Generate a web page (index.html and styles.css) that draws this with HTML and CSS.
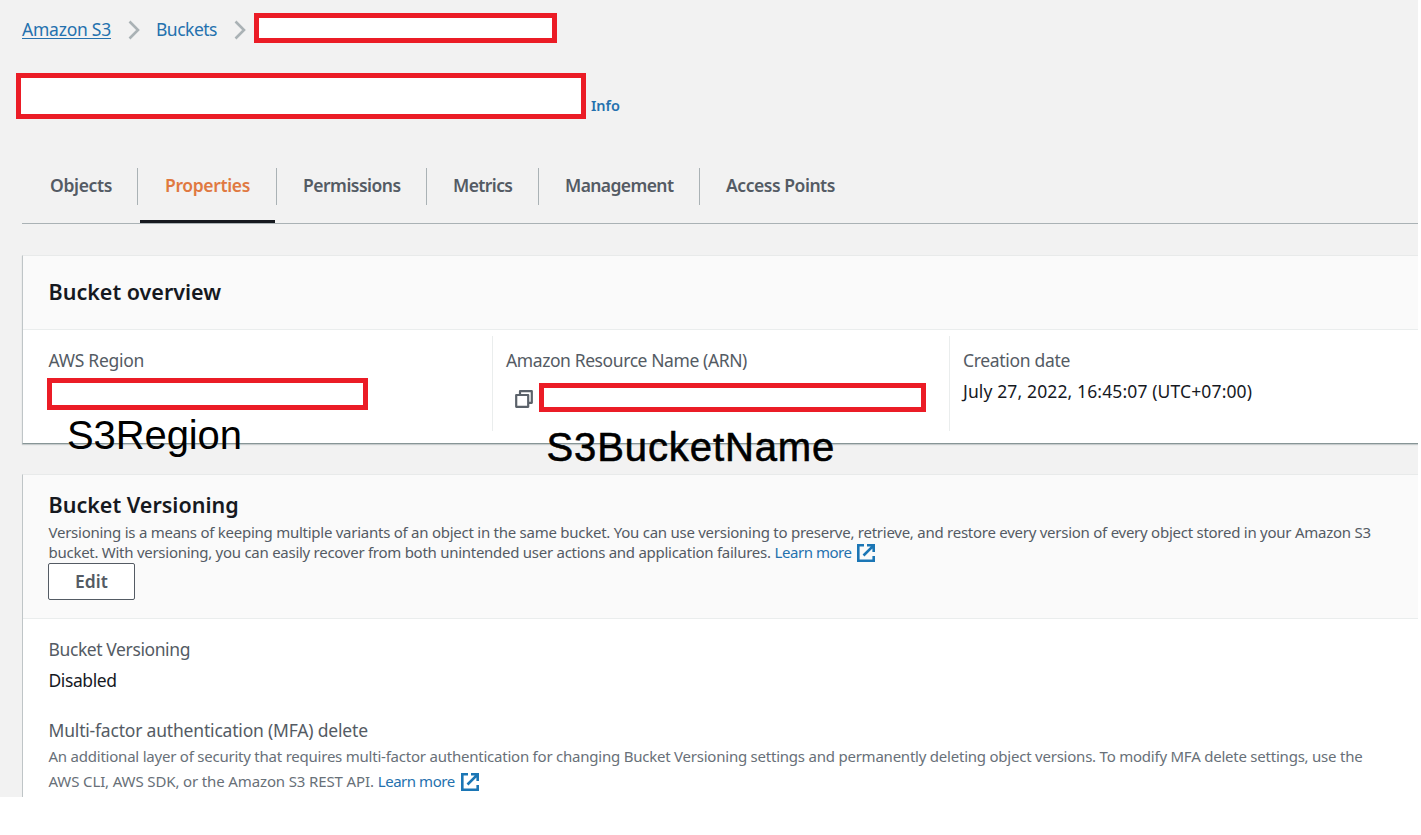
FILE: index.html
```html
<!DOCTYPE html>
<html lang="en">
<head>
<meta charset="utf-8">
<title>Bucket properties</title>
<link rel="stylesheet" href="styles.css">
</head>
<body>
<div class="app">
  <nav class="crumbs">
    <a class="crumb crumb-home" href="#">Amazon S3</a>
    <svg class="chevron" width="12" height="20" viewBox="0 0 12 20"><path d="M1.5 1.5 10 10 1.5 18.5" fill="none" stroke="#aab2b5" stroke-width="2.6"/></svg>
    <a class="crumb crumb-buckets" href="#">Buckets</a>
    <svg class="chevron" width="12" height="20" viewBox="0 0 12 20"><path d="M1.5 1.5 10 10 1.5 18.5" fill="none" stroke="#aab2b5" stroke-width="2.6"/></svg>
    <span class="redacted redacted-crumb"></span>
  </nav>

  <header class="title-row">
    <span class="redacted redacted-title"></span>
    <a class="info" href="#">Info</a>
  </header>

  <nav class="tabs">
    <a class="tab tab-objects" href="#">Objects</a>
    <a class="tab tab-properties" href="#">Properties</a>
    <a class="tab tab-permissions" href="#">Permissions</a>
    <a class="tab tab-metrics" href="#">Metrics</a>
    <a class="tab tab-management" href="#">Management</a>
    <a class="tab tab-access" href="#">Access Points</a>
  </nav>

  <section class="card overview">
    <div class="card-head overview-head"><h2 class="heading">Bucket overview</h2></div>
    <div class="columns">
      <div class="column">
        <div class="label label-region">AWS Region</div>
        <span class="redacted redacted-region"></span>
        <span class="note note-region">S3Region</span>
      </div>
      <div class="column">
        <div class="label label-arn">Amazon Resource Name (ARN)</div>
        <div class="arn">
          <svg width="18" height="18" viewBox="0 0 18 18" fill="none" stroke="#5b626a" stroke-width="2.2" stroke-linejoin="round"><path d="M5 4.5V1.2h11.8v11.6h-3.3"/><path d="M1.2 5h12v11.8h-12z"/></svg>
          <span class="redacted redacted-arn"></span>
        </div>
        <span class="note note-bucket">S3BucketName</span>
      </div>
      <div class="column">
        <div class="label label-date">Creation date</div>
        <div class="value value-date">July 27, 2022, 16:45:07 (UTC+07:00)</div>
      </div>
    </div>
  </section>

  <section class="card versioning">
    <div class="card-head versioning-head">
      <h2 class="heading heading-versioning">Bucket Versioning</h2>
      <p class="desc">
        <span class="desc-one">Versioning is a means of keeping multiple variants of an object in the same bucket. You can use versioning to preserve, retrieve, and restore every version of every object stored in your Amazon S3</span><br>
        <span class="desc-two">bucket. With versioning, you can easily recover from both unintended user actions and application failures.</span>
        <a class="more" href="#">Learn more</a><svg class="external" width="18" height="18" viewBox="0 0 18 18" fill="none" stroke="#1b76b5" stroke-width="2.6"><path d="M7 1.3H1.3v15.4h15.4V12"/><path d="M10 1.3h6.7V8M16.2 1.8 6.5 11.5"/></svg>
      </p>
      <button class="edit" type="button">Edit</button>
    </div>
    <div class="card-body">
      <div class="label label-versioning">Bucket Versioning</div>
      <div class="value value-disabled">Disabled</div>
      <div class="label label-mfa">Multi-factor authentication (MFA) delete</div>
      <p class="hint">
        <span class="hint-one">An additional layer of security that requires multi-factor authentication for changing Bucket Versioning settings and permanently deleting object versions. To modify MFA delete settings, use the</span><br>
        <span class="hint-two">AWS CLI, AWS SDK, or the Amazon S3 REST API.</span>
        <a class="more" href="#">Learn more</a><svg class="external external-hint" width="18" height="18" viewBox="0 0 18 18" fill="none" stroke="#1b76b5" stroke-width="2.6"><path d="M7 1.3H1.3v15.4h15.4V12"/><path d="M10 1.3h6.7V8M16.2 1.8 6.5 11.5"/></svg>
      </p>
    </div>
  </section>
</div>
</body>
</html>
```
FILE: styles.css
```css
* { box-sizing: border-box; }
body {
  margin: 0;
  background: #fff;
  font-family: "Noto Sans", "Open Sans", sans-serif;
  font-size: 17.5px;
  color: #16191f;
}
a { color: #2471ae; text-decoration: none; }
.app {
  width: 1418px;
  height: 797px;
  overflow: hidden;
  background: #f2f2f2;
}
.redacted {
  display: block;
  flex: none;
  background: #fff;
  border: 5px solid #eb1c26;
}

.crumbs {
  display: flex;
  height: 73px;
  padding: 13px 0 0 22px;
}
.crumb { line-height: 32px; white-space: nowrap; }
.crumb-home {
  width: 89px;
  letter-spacing: -0.24px;
  text-decoration: underline;
  text-decoration-thickness: 1px;
  text-underline-offset: 2px;
}
.crumb-buckets { width: 61px; letter-spacing: -0.5px; }
.chevron { flex: none; margin: 7px 16px 0 17px; }
.crumb-buckets + .chevron { margin-right: 8px; }
.redacted-crumb { width: 303px; height: 30px; }

.title-row {
  display: flex;
  height: 95px;
  padding-left: 16px;
  gap: 5px;
}
.redacted-title { width: 570px; height: 46px; }
.info {
  padding-top: 22px;
  font-size: 14.5px;
  font-weight: 600;
  line-height: 21px;
}

.tabs {
  display: flex;
  height: 56px;
  margin-left: 22px;
  border-bottom: 1px solid #aab2b5;
}
.tab {
  position: relative;
  height: 37px;
  border-right: 1px solid #aab2b5;
  color: #545b64;
  font-weight: 600;
  line-height: 35px;
  white-space: nowrap;
}
.tab-objects { width: 116px; padding-left: 28px; letter-spacing: -0.35px; }
.tab-properties { width: 139px; padding-left: 27px; letter-spacing: -0.35px; color: #e07941; }
.tab-properties::after {
  content: "";
  position: absolute;
  left: 2px;
  top: 52px;
  width: 135px;
  height: 3px;
  background: #16191f;
}
.tab-permissions { width: 150px; padding-left: 26px; letter-spacing: -0.5px; }
.tab-metrics { width: 112px; padding-left: 26px; letter-spacing: -0.6px; }
.tab-management { width: 161px; padding-left: 26px; letter-spacing: -0.6px; }
.tab-access { padding-left: 26px; border-right: 0; letter-spacing: -0.45px; }

.card {
  margin-left: 22px;
  background: #fff;
  border-top: 1px solid #e8eaea;
  border-left: 1px solid #bfc5c7;
}
.card-head { background: #fafafa; border-bottom: 1px solid #eaeded; }
.heading {
  margin: 0;
  font-size: 21.5px;
  font-weight: 600;
  line-height: 30px;
}
.overview {
  height: 189px;
  margin-top: 31px;
  border-bottom: 1px solid #879596;
  box-shadow: 0 1px 1px #c7cccd;
}
.overview-head { height: 74px; padding: 21px 0 0 25.5px; }
.columns {
  display: grid;
  grid-template-columns: 469px 457px 1fr;
  height: 101px;
  padding-top: 6px;
}
.column {
  position: relative;
  padding: 11px 0 0 25.5px;
  height: 95px;
}
.column + .column { border-left: 1px solid #eaeded; padding-left: 13px; }
.label { color: #545b64; line-height: 27px; white-space: nowrap; }
.label-region { letter-spacing: -0.28px; }
.label-arn { letter-spacing: -0.41px; }
.label-date { letter-spacing: -0.32px; }
.value { line-height: 27px; white-space: nowrap; }
.value-date { margin-top: 4px; letter-spacing: 0.13px; }
.redacted-region { width: 321px; height: 32px; margin: 4px 0 0 -1.5px; }
.arn { display: flex; margin: 9px 0 0 9px; gap: 6px; }
.arn svg { margin-top: 7px; flex: none; }
.redacted-arn { width: 387px; height: 29px; }
.note {
  position: absolute;
  z-index: 1;
  color: #000;
  font-family: "Liberation Sans", Arial, sans-serif;
  font-size: 40px;
  line-height: 46px;
  white-space: nowrap;
}
.note-region { left: 44px; top: 76px; letter-spacing: -0.1px; }
.note-bucket { left: 53.5px; top: 88px; letter-spacing: 0.9px; -webkit-text-stroke: 0.6px #000; }

.versioning { height: 323px; margin-top: 30px; }
.versioning-head { height: 144px; padding: 15px 0 0 25.5px; }
.heading-versioning { letter-spacing: 0; }
.desc, .hint {
  margin: 0;
  font-size: 15px;
  white-space: nowrap;
  color: #545b64;
}
.desc { height: 43px; padding-top: 2px; line-height: 20px; }
.desc-one { letter-spacing: -0.256px; }
.desc-two { letter-spacing: -0.27px; }
.more { letter-spacing: -0.46px; }
.external { margin-left: 5px; vertical-align: -4px; }
.external-hint { margin-left: 6px; }
.edit {
  display: block;
  width: 87px;
  height: 37px;
  margin-left: -0.5px;
  padding: 0;
  background: #fff;
  border: 1px solid #545b64;
  border-radius: 2px;
  color: #545b64;
  font: 600 17.5px/33px "Noto Sans", sans-serif;
}
.card-body { padding: 17px 0 0 25.5px; }
.label-versioning { letter-spacing: -0.4px; }
.value-disabled { margin-top: 4px; letter-spacing: -0.42px; }
.label-mfa { margin-top: 23px; letter-spacing: -0.19px; }
.hint { line-height: 25px; color: #687078; }
.hint-one { letter-spacing: -0.226px; }
.hint-two { letter-spacing: -0.13px; }
```
